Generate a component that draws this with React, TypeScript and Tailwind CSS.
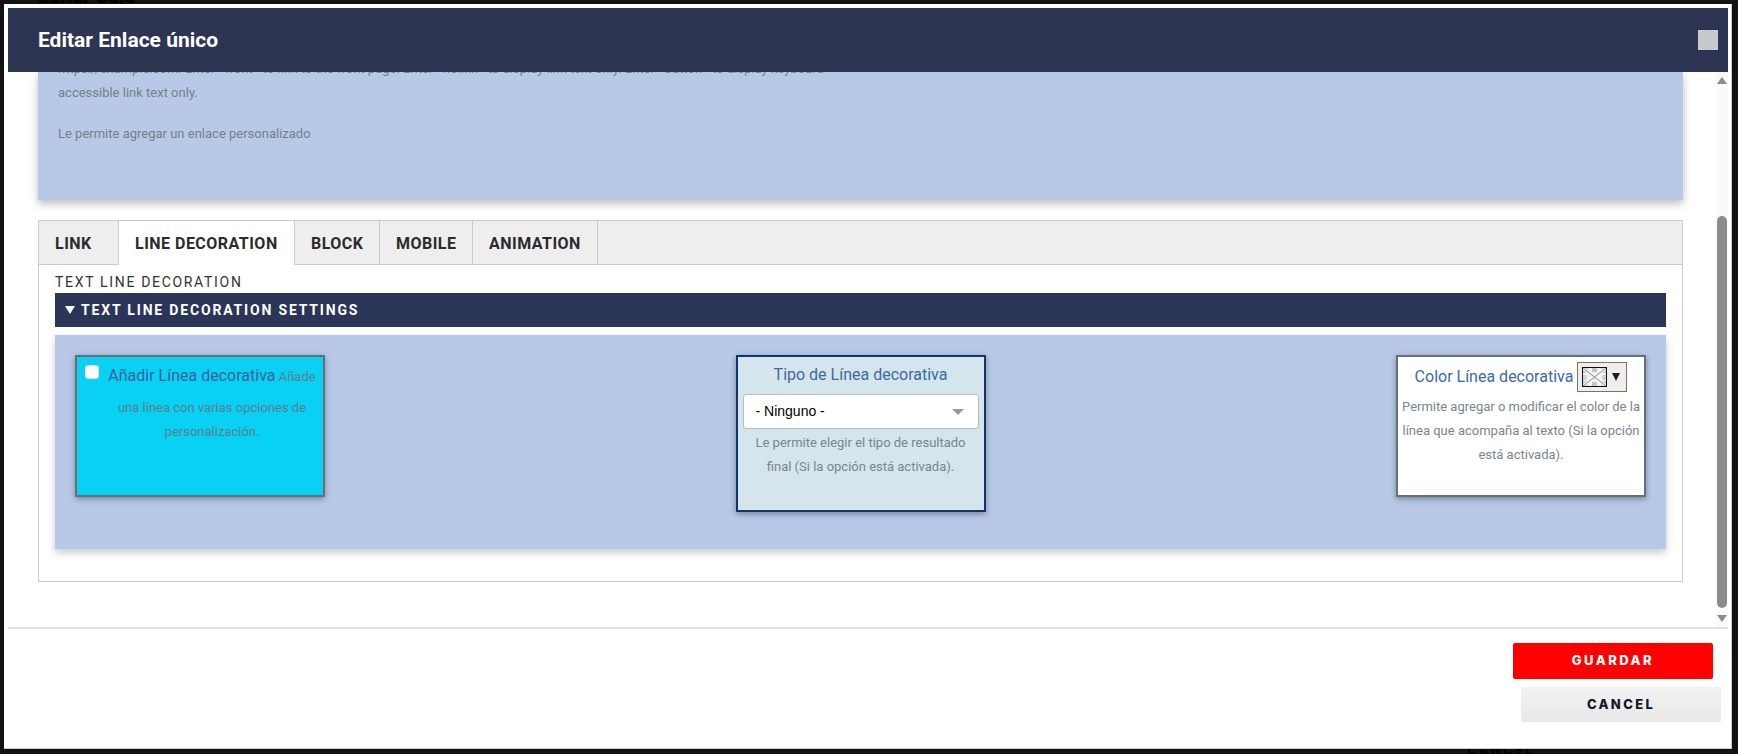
import React from 'react';

const tabs = ['LINK', 'LINE DECORATION', 'BLOCK', 'MOBILE', 'ANIMATION'];
const tabWidths = ['w-[80px]', 'w-[176px]', 'w-[85px]', 'w-[93px]', 'w-[125px]'];

const SwatchIcon = () => (
  <svg viewBox="0 0 25 20" className="w-[25px] h-[20px] block">
    <rect x="0" y="0" width="25" height="20" fill="#f4f4f4" />
    <rect x="1" y="1" width="5" height="5" fill="#c4c4c4" />
    <rect x="10" y="1" width="5" height="4" fill="#c4c4c4" />
    <rect x="19" y="1" width="5" height="5" fill="#c4c4c4" />
    <rect x="1" y="8" width="4" height="5" fill="#d4d4d4" />
    <rect x="10" y="8" width="5" height="5" fill="#c4c4c4" />
    <rect x="20" y="8" width="4" height="5" fill="#d4d4d4" />
    <rect x="1" y="14" width="5" height="5" fill="#c4c4c4" />
    <rect x="10" y="15" width="5" height="4" fill="#c4c4c4" />
    <rect x="19" y="14" width="5" height="5" fill="#c4c4c4" />
    <path d="M1 1 L24 19 M24 1 L1 19" stroke="#ffffff" strokeWidth="3" />
    <path d="M1 1 L24 19 M24 1 L1 19" stroke="#a6a6a6" strokeWidth="1.2" />
    <rect x="0.5" y="0.5" width="24" height="19" fill="none" stroke="#111111" />
  </svg>
);

const App: React.FC = () => {
  return (
    <div className="relative h-[754px] bg-[#111111] p-[4px] pr-[6px] pb-[5px] overflow-hidden font-['Roboto',sans-serif]">
      {/* page behind the dialog, only its edges show */}
      <span className="absolute left-[38px] -top-[19px] text-[20px] font-bold text-black">Editar Caja</span>
      <span className="absolute left-[1467px] top-[741px] text-[13px] font-extrabold tracking-[0.18em] text-black font-['Inter',sans-serif]">CANCEL</span>

      <div className="relative z-10 h-full bg-white border border-[#cccccc] border-t-0 border-l-0 flex flex-col pl-[4px] pt-[4px] pr-[3px]">
        <header className="h-[64px] shrink-0 bg-[#2e3552] flex items-center justify-between pl-[30px] pr-[10px] z-10">
          <h1 className="text-white text-[21px] font-bold pt-[1px]">Editar Enlace único</h1>
          <button className="w-[20px] h-[20px] bg-[#c8c9d0]"></button>
        </header>

        <div className="h-[557px] shrink-0 flex border-b-2 border-[#e0e0e0]">
          <main className="flex-1 min-w-0 overflow-hidden pl-[30px] pr-[33px]">
            <section className="h-[128px] bg-[#b7c9e6] shadow-[0_4px_8px_rgba(0,0,0,0.25)] overflow-hidden">
              <div className="-mt-[15px] pl-[20px] w-[820px] text-[13px] leading-[24px] text-[#767f8a]">
                <p className="whitespace-nowrap">https://example.com. Enter &lt;front&gt; to link to the front page. Enter &lt;nolink&gt; to display link text only. Enter &lt;button&gt; to display keyboard-</p>
                <p>accessible link text only.</p>
                <p className="mt-[17px]">Le permite agregar un enlace personalizado</p>
              </div>
            </section>

            <section className="mt-[20px] h-[362px] border border-[#cccccc]">
              <nav className="h-[44px] bg-[#eeeeee] border-b border-[#cccccc] flex">
                {tabs.map((tab, i) => (
                  <div
                    key={tab}
                    className={`${tabWidths[i]} h-[44px] shrink-0 flex items-center pl-[16px] pt-[2px] border-r border-[#cccccc] text-[16px] font-bold tracking-[0.03em] text-[#2b2b2b] ${i === 1 ? 'bg-white' : ''}`}
                  >
                    {tab}
                  </div>
                ))}
              </nav>

              <div className="px-[16px]">
                <div className="h-[28px] pt-[7px] text-[14px] leading-[20px] tracking-[0.12em] text-[#333333]">TEXT LINE DECORATION</div>
                <div className="h-[34px] bg-[#2a3558] flex items-center pl-[10px] gap-[6px] text-white text-[14px] font-bold tracking-[0.13em]">
                  <span className="w-0 h-0 border-x-[5px] border-x-transparent border-t-[8px] border-t-white"></span>
                  <span>TEXT LINE DECORATION SETTINGS</span>
                </div>

                <div className="mt-[8px] h-[214px] bg-[#b7c9e6] shadow-[0_4px_8px_rgba(0,0,0,0.2)] flex items-start justify-between px-[20px] pt-[20px]">
                  {/* Checkbox card */}
                  <div className="w-[250px] h-[142px] bg-[#08d1f3] border-2 border-[#666e7c] shadow-[0_2px_6px_rgba(0,0,0,0.35)] flex pl-[8px] pr-[6px]">
                    <span className="mt-[8px] w-[14px] h-[14px] shrink-0 bg-white rounded-[3px] border border-[#dddddd]"></span>
                    <div className="ml-[8px] -mt-[1px] flex-1 text-center text-[13px] leading-[24px] text-[#5f7c8e]">
                      <span className="text-[16px] leading-[40px] text-[#41609e]">Añadir Línea decorativa</span> Añade una línea con varias opciones de personalización.
                    </div>
                  </div>

                  {/* Select card */}
                  <div className="w-[250px] h-[157px] bg-[#d4e6eb] border-2 border-[#14326f] shadow-[0_2px_6px_rgba(0,0,0,0.35)] px-[5px] text-center">
                    <div className="text-[16px] leading-[24px] pt-[6px] text-[#3d6aa3]">Tipo de Línea decorativa</div>
                    <div className="mt-[7px] h-[35px] bg-white border border-[#bbbbbb] rounded-[3px] flex items-center justify-between pl-[12px] pr-[14px] font-['Liberation_Sans',sans-serif] text-[14px] text-black">
                      <span>- Ninguno -</span>
                      <span className="w-0 h-0 border-x-[6px] border-x-transparent border-t-[6px] border-t-[#999999]"></span>
                    </div>
                    <p className="mt-[2px] text-[13px] leading-[24px] text-[#7a8590]">Le permite elegir el tipo de resultado final (Si la opción está activada).</p>
                  </div>

                  {/* Color card */}
                  <div className="w-[250px] h-[142px] bg-white border-2 border-[#666e7c] shadow-[0_2px_6px_rgba(0,0,0,0.35)] px-[2px] text-center">
                    <div className="flex items-center justify-center gap-[4px] pt-[5px]">
                      <span className="text-[16px] text-[#3d6aa3]">Color Línea decorativa</span>
                      <span className="w-[50px] h-[30px] shrink-0 bg-[#eeeeee] border border-[#8b6e55] flex items-center pl-[4px] gap-[5px]">
                        <SwatchIcon />
                        <span className="w-0 h-0 border-x-[4px] border-x-transparent border-t-[8px] border-t-[#222222]"></span>
                      </span>
                    </div>
                    <p className="mt-[3px] text-[13px] leading-[24px] text-[#7a8590]">Permite agregar o modificar el color de la línea que acompaña al texto (Si la opción está activada).</p>
                  </div>
                </div>
              </div>
            </section>
          </main>

          {/* Scrollbar */}
          <div className="w-[12px] shrink-0 bg-[#fafafa] flex flex-col items-center">
            <span className="mt-[5px] w-0 h-0 border-x-[5px] border-x-transparent border-b-[7px] border-b-[#8c8c8c]"></span>
            <span className="mt-[132px] w-[10px] h-[392px] shrink-0 rounded-[5px] bg-[#8c8c8c]"></span>
            <span className="mt-[7px] w-0 h-0 border-x-[5px] border-x-transparent border-t-[7px] border-t-[#8c8c8c]"></span>
          </div>
        </div>

        <footer className="flex-1 flex flex-col items-end pt-[14px] pr-[7px]">
          <button className="w-[200px] h-[36px] mr-[8px] bg-[#ff0000] rounded-[2px] text-white text-[13px] font-extrabold tracking-[0.19em] font-['Inter',sans-serif]">GUARDAR</button>
          <button className="mt-[8px] w-[200px] h-[35px] bg-gradient-to-b from-[#f1f1f1] to-[#e8e8e8] rounded-[2px] text-[#111827] text-[13px] font-extrabold tracking-[0.18em] font-['Inter',sans-serif]">CANCEL</button>
        </footer>
      </div>
    </div>
  );
};

export default App;
